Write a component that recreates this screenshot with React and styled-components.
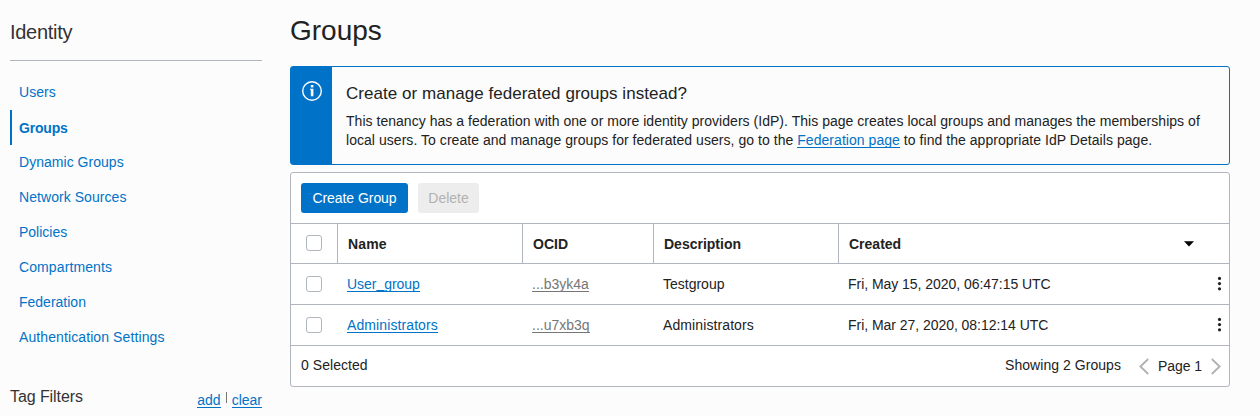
import React from 'react';
import styled, { createGlobalStyle } from 'styled-components';

const GlobalStyle = createGlobalStyle`
  * { box-sizing: border-box; }
  body {
    margin: 0;
    background: #fcfcfc;
    color: #222;
    font: 14px/20px "Liberation Sans", Arial, Helvetica, sans-serif;
    -webkit-font-smoothing: antialiased;
  }
  h1, h2, h3, p, ul { margin: 0; padding: 0; font-weight: 400; }
`;

const Page = styled.div`
  display: flex;
  gap: 28px;
  width: 1260px;
  height: 416px;
  padding: 0 30px 0 10px;
  overflow: hidden;
`;

const Sidebar = styled.aside`
  flex: none;
  width: 252px;
`;

const SidebarTitle = styled.h2`
  height: 61px;
  padding-top: 20px;
  border-bottom: 1px solid #b1b5be;
  font-size: 20px;
  line-height: 24px;
  letter-spacing: ${(p) => p.$ls || 0}px;
  color: #333;
`;

const Nav = styled.ul`
  padding-top: 14px;
  list-style: none;
`;

const NavItem = styled.li`
  height: 35px;
  padding: ${(p) => (p.$active ? '8px 0 0 7px' : '7px 0 0 9px')};
  border-left: ${(p) => (p.$active ? '2px solid #0073c8' : '0')};
  font-weight: ${(p) => (p.$active ? 700 : 400)};
`;

const NavLink = styled.a`
  color: #0073c8;
  letter-spacing: ${(p) => p.$ls || 0}px;
`;

const TagFilters = styled.div`
  display: flex;
  justify-content: space-between;
  padding-top: 32px;
`;

const TagTitle = styled.h3`
  font-size: 16px;
  line-height: 20px;
  letter-spacing: ${(p) => p.$ls || 0}px;
  color: #333;
`;

const TagActions = styled.div`
  display: flex;
  align-items: flex-start;
  padding-top: 5px;
`;

const Separator = styled.span`
  width: 1px;
  height: 11px;
  margin: 0 5px;
  background: #777;
`;

const Link = styled.a`
  color: ${(p) => (p.$muted ? '#767676' : '#0073c8')};
  letter-spacing: ${(p) => p.$ls || 0}px;
  line-height: 16px;
  background: linear-gradient(currentColor, currentColor) 0 100% / 100% 1px no-repeat;
`;

const Raised = styled.span`
  position: relative;
  top: -1px;
`;

const Main = styled.main`
  width: 940px;
`;

const PageTitle = styled.h1`
  height: 66px;
  padding-top: 14px;
  font-size: 28px;
  line-height: 34px;
  letter-spacing: ${(p) => p.$ls || 0}px;
`;

const Banner = styled.section`
  display: flex;
  height: 99px;
  border: 1px solid #0073c8;
  border-radius: 3px;
`;

const BannerIcon = styled.div`
  display: flex;
  justify-content: center;
  width: 41px;
  padding-top: 14px;
  background: #0073c8;
`;

const BannerBody = styled.div`
  padding: 17px 0 0 14px;
`;

const BannerTitle = styled.h3`
  margin-bottom: 8px;
  font-size: 17px;
  letter-spacing: ${(p) => p.$ls || 0}px;
`;

const BannerLine = styled.p`
  line-height: 19px;
  white-space: nowrap;
  letter-spacing: ${(p) => p.$ls || 0}px;
`;

const Panel = styled.section`
  height: 215px;
  margin-top: 7px;
  border: 1px solid #b1b5be;
  border-radius: 3px;
  background: #fff;
`;

const Toolbar = styled.div`
  display: flex;
  gap: 10px;
  height: 51px;
  padding: 10px;
  border-bottom: 1px solid #b1b5be;
`;

const Button = styled.button`
  width: ${(p) => p.$width}px;
  height: 30px;
  padding: 0;
  border: 0;
  border-radius: 3px;
  background: ${(p) => (p.disabled ? '#ededed' : '#0073c8')};
  color: ${(p) => (p.disabled ? '#b2b2b2' : '#fff')};
  font: inherit;
  letter-spacing: ${(p) => p.$ls || 0}px;
`;

const Row = styled.div`
  display: grid;
  grid-template-columns: 46px 185px 131px 185px 1fr;
  height: ${(p) => (p.$head ? 40 : 41)}px;
  border-bottom: 1px solid #b1b5be;
`;

const CheckCell = styled.div`
  padding: ${(p) => (p.$head ? 11 : 12)}px 0 0 15px;
`;

const Checkbox = styled.span`
  display: block;
  width: 16px;
  height: 16px;
  border: 1px solid #b1b5be;
  border-radius: 3px;
  background: #fff;
`;

const HeadCell = styled.div`
  display: flex;
  justify-content: space-between;
  padding: 10px 35px 0 10px;
  border-left: 1px solid #b1b5be;
  font-weight: 700;
  letter-spacing: ${(p) => p.$ls || 0}px;
`;

const Cell = styled.div`
  padding: 10px 0 0 10px;
  white-space: nowrap;
  letter-spacing: ${(p) => p.$ls || 0}px;
`;

const LastCell = styled(Cell)`
  display: flex;
  justify-content: space-between;
  padding-right: 7px;
`;

const SortArrow = styled.svg`
  display: block;
  margin-top: 7px;
`;

const Dots = styled.svg`
  display: block;
  margin-top: 2px;
`;

const Footer = styled.div`
  display: flex;
  height: 40px;
  padding: 9px 8px 0 10px;
`;

const FooterText = styled.span`
  letter-spacing: ${(p) => p.$ls || 0}px;
  margin-left: ${(p) => (p.$push ? 'auto' : '0')};
`;

const Pager = styled.div`
  display: flex;
  justify-content: space-between;
  width: 82px;
  margin-left: 18px;
  padding-top: 1px;
`;

const PageLabel = styled.span`
  letter-spacing: -0.1px;
`;

const Chevron = styled.svg`
  display: block;
  margin-top: 2px;
`;

const navItems = [
  { label: 'Users', ls: 0.05 },
  { label: 'Groups', ls: -0.2, active: true },
  { label: 'Dynamic Groups', ls: 0.03 },
  { label: 'Network Sources', ls: 0.06 },
  { label: 'Policies', ls: 0 },
  { label: 'Compartments', ls: 0.1 },
  { label: 'Federation', ls: 0 },
  { label: 'Authentication Settings', ls: 0.1 },
];

const groups = [
  { name: 'User_group', nameLs: -0.03, ocid: '...b3yk4a', description: 'Testgroup', descLs: 0, created: 'Fri, May 15, 2020, 06:47:15 UTC' },
  { name: 'Administrators', nameLs: 0.1, ocid: '...u7xb3q', description: 'Administrators', descLs: 0.1, created: 'Fri, Mar 27, 2020, 08:12:14 UTC' },
];

function InfoIcon() {
  return (
    <svg width="22" height="22" viewBox="0 0 22 22" fill="none">
      <circle cx="11" cy="10" r="9.3" stroke="#fff" strokeWidth="1.4" />
      <rect x="9.8" y="4" width="2.6" height="2.4" fill="#fff" />
      <path d="M9 7.8H12.4V15.2H9.8V8.8H9Z" fill="#fff" />
    </svg>
  );
}

function MoreIcon() {
  return (
    <Dots width="5" height="16" viewBox="0 0 5 16" fill="#222">
      <circle cx="2.5" cy="2.4" r="1.6" />
      <circle cx="2.5" cy="7.6" r="1.6" />
      <circle cx="2.5" cy="12.8" r="1.6" />
    </Dots>
  );
}

function GroupName({ text }) {
  return text.split(/(_)/).map((part, i) => (part === '_' ? <Raised key={i}>_</Raised> : part));
}

export default function App() {
  return (
    <>
      <GlobalStyle />
      <Page>
        <Sidebar>
          <SidebarTitle $ls={-0.3}>Identity</SidebarTitle>
          <Nav>
            {navItems.map((item) => (
              <NavItem key={item.label} $active={item.active}>
                <NavLink $ls={item.ls}>{item.label}</NavLink>
              </NavItem>
            ))}
          </Nav>
          <TagFilters>
            <TagTitle $ls={-0.08}>Tag Filters</TagTitle>
            <TagActions>
              <Link>add</Link>
              <Separator />
              <Link>clear</Link>
            </TagActions>
          </TagFilters>
        </Sidebar>
        <Main>
          <PageTitle>Groups</PageTitle>
          <Banner>
            <BannerIcon><InfoIcon /></BannerIcon>
            <BannerBody>
              <BannerTitle $ls={0.04}>Create or manage federated groups instead?</BannerTitle>
              <BannerLine $ls={0.032}>This tenancy has a federation with one or more identity providers (IdP). This page creates local groups and manages the memberships of</BannerLine>
              <BannerLine $ls={0.045}>local users. To create and manage groups for federated users, go to the <Link $ls={0.045}>Federation page</Link> to find the appropriate IdP Details page.</BannerLine>
            </BannerBody>
          </Banner>
          <Panel>
            <Toolbar>
              <Button $width={107} $ls={-0.05}>Create Group</Button>
              <Button $width={61} disabled>Delete</Button>
            </Toolbar>
            <Row $head>
              <CheckCell $head><Checkbox /></CheckCell>
              <HeadCell $ls={0.15}>Name</HeadCell>
              <HeadCell>OCID</HeadCell>
              <HeadCell>Description</HeadCell>
              <HeadCell>
                Created
                <SortArrow width="10" height="6" viewBox="0 0 10 6"><path d="M0 .2H10L5 5.4Z" fill="#000" /></SortArrow>
              </HeadCell>
            </Row>
            {groups.map((g) => (
              <Row key={g.name}>
                <CheckCell><Checkbox /></CheckCell>
                <Cell><Link $ls={g.nameLs}><GroupName text={g.name} /></Link></Cell>
                <Cell><Link $muted>{g.ocid}</Link></Cell>
                <Cell $ls={g.descLs}>{g.description}</Cell>
                <LastCell $ls={-0.04}>{g.created}<MoreIcon /></LastCell>
              </Row>
            ))}
            <Footer>
              <FooterText $ls={0.05}>0 Selected</FooterText>
              <FooterText $push $ls={0.05}>Showing 2 Groups</FooterText>
              <Pager>
                <Chevron width="10" height="17" viewBox="0 0 10 17" fill="none"><path d="M9.2 1L1.4 8.5L9.2 16" stroke="#b2b2b2" strokeWidth="1.9" /></Chevron>
                <PageLabel>Page 1</PageLabel>
                <Chevron width="10" height="17" viewBox="0 0 10 17" fill="none"><path d="M.8 1L8.6 8.5L.8 16" stroke="#b2b2b2" strokeWidth="1.9" /></Chevron>
              </Pager>
            </Footer>
          </Panel>
        </Main>
      </Page>
    </>
  );
}
